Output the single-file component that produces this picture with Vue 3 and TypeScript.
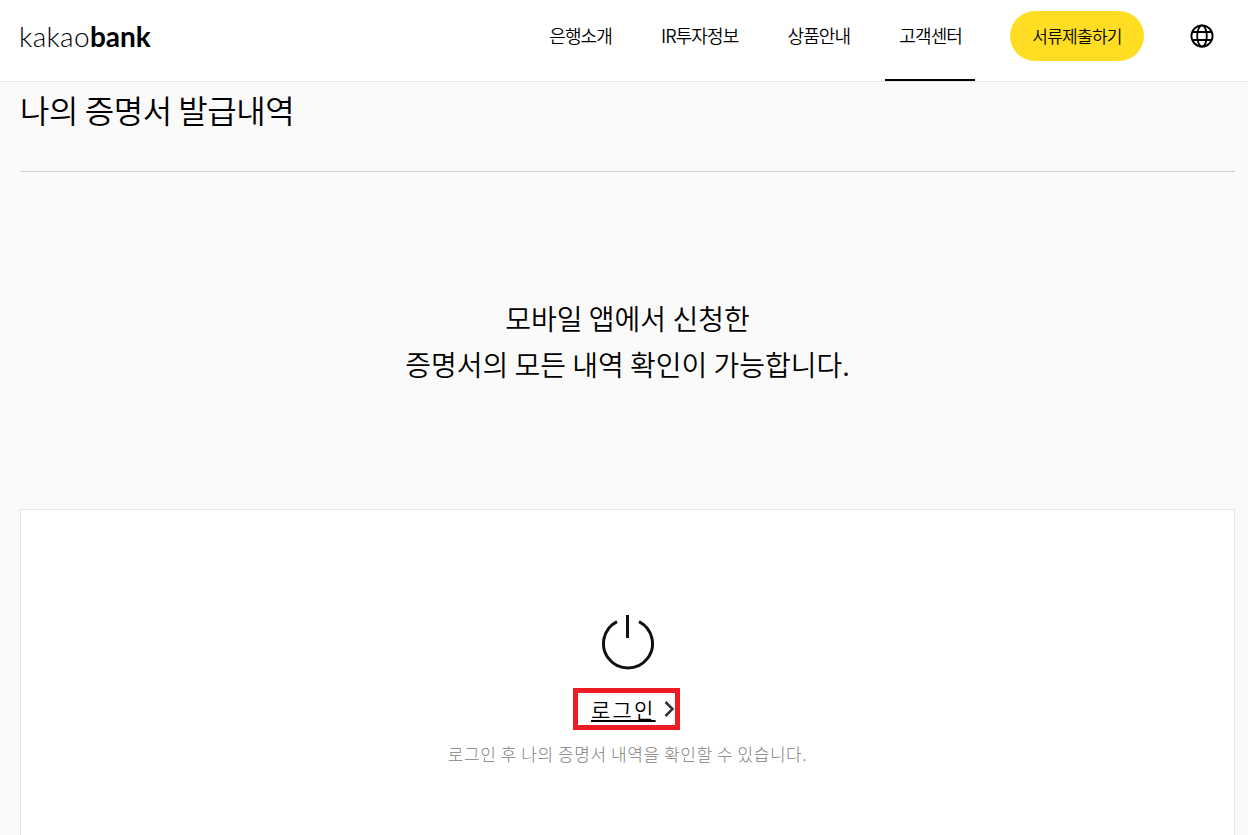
<script setup lang="ts">
const menus = [
  { label: "은행소개", active: false },
  { label: "IR투자정보", active: false },
  { label: "상품안내", active: false },
  { label: "고객센터", active: true },
];
</script>

<template>
  <div class="page">
    <header class="header">
      <a class="logo"><span class="logo-light">kakao</span><b>bank</b></a>
      <nav class="nav">
        <a v-for="m in menus" :key="m.label" class="nav-item" :class="{ active: m.active }">{{ m.label }}</a>
      </nav>
      <a class="submit">서류제출하기</a>
      <svg class="globe" width="24" height="24" viewBox="0 0 24 24" fill="none" stroke="#000" stroke-width="1.8">
        <circle cx="12" cy="12" r="10.6" />
        <ellipse cx="12" cy="12" rx="4.8" ry="10.6" />
        <path d="M2.5 8h19M2.5 16h19" />
      </svg>
    </header>

    <main class="content">
      <h2 class="title">나의 증명서 발급내역</h2>
      <p class="lead">모바일 앱에서 신청한<br />증명서의 모든 내역 확인이 가능합니다.</p>
      <section class="card">
        <svg class="power" width="52" height="56" viewBox="0 0 52 56" fill="none" stroke="#111" stroke-width="3">
          <path d="M15 6.6a24.5 24.5 0 1 0 22 0" />
          <path d="M25.5 0v23" />
        </svg>
        <a class="login">
          <span class="login-text">로그인</span>
          <svg width="11" height="16" viewBox="0 0 11 16" fill="none" stroke="#333" stroke-width="2.5">
            <path d="M1.5 1l7 7-7 7" />
          </svg>
        </a>
        <p class="hint">로그인 후 나의 증명서 내역을 확인할 수 있습니다.</p>
      </section>
    </main>
  </div>
</template>

<style>
html,
body {
  margin: 0;
  height: 835px;
  overflow: hidden;
  background: #fafafa;
}
</style>

<style scoped>
.page {
  font-family: "Noto Sans CJK KR", "Noto Sans", sans-serif;
  font-weight: 350;
  color: #000;
}
.header {
  box-sizing: border-box;
  display: flex;
  align-items: center;
  height: 82px;
  padding: 0 34px 0 19px;
  border-bottom: 1px solid #e5e5e5;
  background: #fff;
}
.logo {
  font-family: Lato, "Open Sans", sans-serif;
  font-size: 28px;
  line-height: 30px;
  margin-right: auto;
  margin-top: -10px;
}
.logo-light {
  font-weight: 300;
  letter-spacing: 0.3px;
}
.logo b {
  font-weight: 700;
}
.nav {
  display: flex;
  align-self: stretch;
  gap: 22.2px;
}
.nav-item {
  box-sizing: border-box;
  display: flex;
  align-items: center;
  height: 81px;
  padding: 0 13px 12px 14px;
  font-size: 18px;
  letter-spacing: -0.9px;
  white-space: nowrap;
}
.nav-item.active {
  border-bottom: 2px solid #000;
  padding-bottom: 10px;
}
.submit {
  display: flex;
  align-items: center;
  justify-content: center;
  width: 134px;
  height: 50px;
  margin: -10px 46px 0 35px;
  border-radius: 25px;
  background: #ffdd22;
  font-size: 17px;
  letter-spacing: -0.75px;
}
.globe {
  margin-top: -10px;
}
.content {
  padding: 0 13px 0 20px;
}
.title {
  margin: 0;
  padding-bottom: 35px;
  height: 54px;
  border-bottom: 1px solid #cfcfcf;
  font-size: 32px;
  font-weight: 350;
  line-height: 54px;
  letter-spacing: -0.45px;
}
.lead {
  margin: 123px 0 0;
  text-align: center;
  font-size: 28px;
  line-height: 46px;
}
.card {
  box-sizing: border-box;
  display: flex;
  flex-direction: column;
  align-items: center;
  height: 500px;
  margin-top: 122px;
  padding-top: 105px;
  border: 1px solid #e5e5e5;
  background: #fff;
}
.login {
  box-sizing: border-box;
  display: flex;
  align-items: center;
  gap: 8px;
  width: 107px;
  height: 42px;
  margin: 17px 2px 0 0;
  padding-left: 13px;
  border: 5px solid #ed1c24;
}
.login-text {
  font-size: 21px;
  letter-spacing: 2.2px;
  line-height: 24px;
  text-decoration: underline;
  text-underline-offset: 2px;
}
.hint {
  margin: 11px 0 0;
  font-size: 17px;
  font-weight: 300;
  color: #808080;
  letter-spacing: 0.57px;
}
</style>
